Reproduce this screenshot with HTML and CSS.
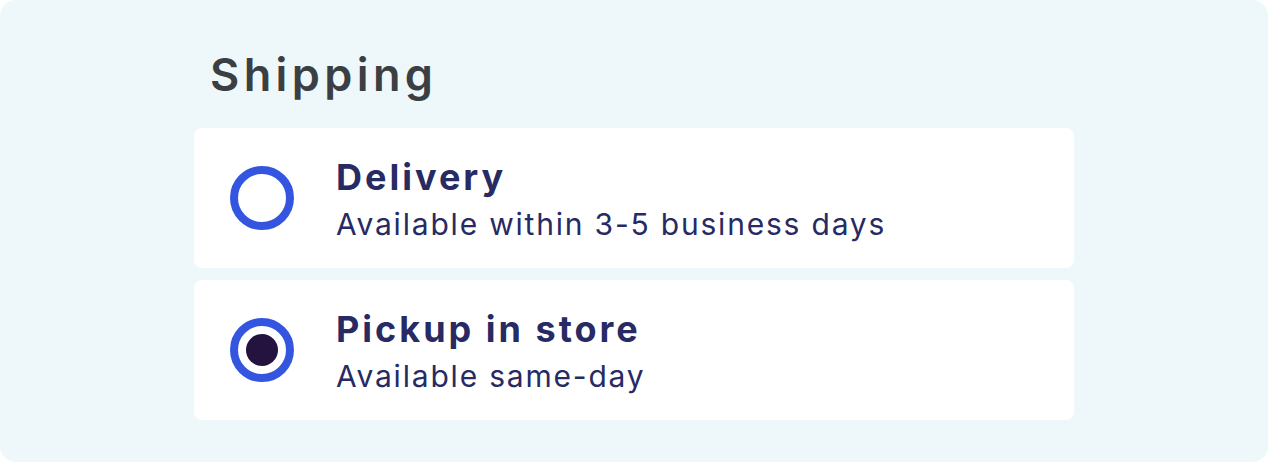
FILE: index.html
```html
<!DOCTYPE html>
<html lang="en">
<head>
    <meta charset="UTF-8">
    <meta name="viewport" content="width=device-width, initial-scale=1.0">
    <title>Shipping</title>
    <link rel="stylesheet" href="styles.css">
</head>
<body>
    <div class="panel">
        <div class="shipping">
            <h1 class="heading">Shipping</h1>

            <label class="option">
                <span class="radio"></span>
                <span class="option-text">
                    <span class="option-title">Delivery</span>
                    <span class="option-sub">Available within 3-5 business days</span>
                </span>
            </label>

            <label class="option">
                <span class="radio checked"></span>
                <span class="option-text">
                    <span class="option-title">Pickup in store</span>
                    <span class="option-sub">Available same-day</span>
                </span>
            </label>
        </div>
    </div>
</body>
</html>
```

FILE: styles.css
```css
body {
    margin: 0;
    background-color: #fff;
    font-family: Inter, "Noto Sans", sans-serif;
}

.panel {
    width: 1268px;
    height: 462px;
    box-sizing: border-box;
    background-color: #eef7f9;
    border-radius: 16px;
    padding: 48px 0 0 194px;
}

.shipping {
    width: 880px;
    display: flex;
    flex-direction: column;
    gap: 12px;
}

.heading {
    margin: 0 0 15px 0;
    padding-left: 16px;
    font-size: 45px;
    line-height: 53px;
    font-weight: 600;
    letter-spacing: 4.4px;
    color: #3a3f44;
}

/* Option cards */
.option {
    display: flex;
    align-items: center;
    gap: 42px;
    height: 140px;
    padding: 0 36px;
    background-color: #fff;
    border-radius: 8px;
}

.radio {
    display: flex;
    align-items: center;
    justify-content: center;
    width: 64px;
    height: 64px;
    box-sizing: border-box;
    border: 8px solid #3355e0;
    border-radius: 50%;
    flex-shrink: 0;
}

.radio.checked::after {
    content: "";
    width: 32px;
    height: 32px;
    border-radius: 50%;
    background-color: #24123f;
}

.option-text {
    display: flex;
    flex-direction: column;
    color: #272a63;
}

.option-title {
    font-size: 36px;
    line-height: 44px;
    font-weight: 700;
    letter-spacing: 3px;
}

.option-sub {
    margin-top: 7px;
    font-size: 30px;
    line-height: 36px;
    letter-spacing: 1.8px;
}
```
